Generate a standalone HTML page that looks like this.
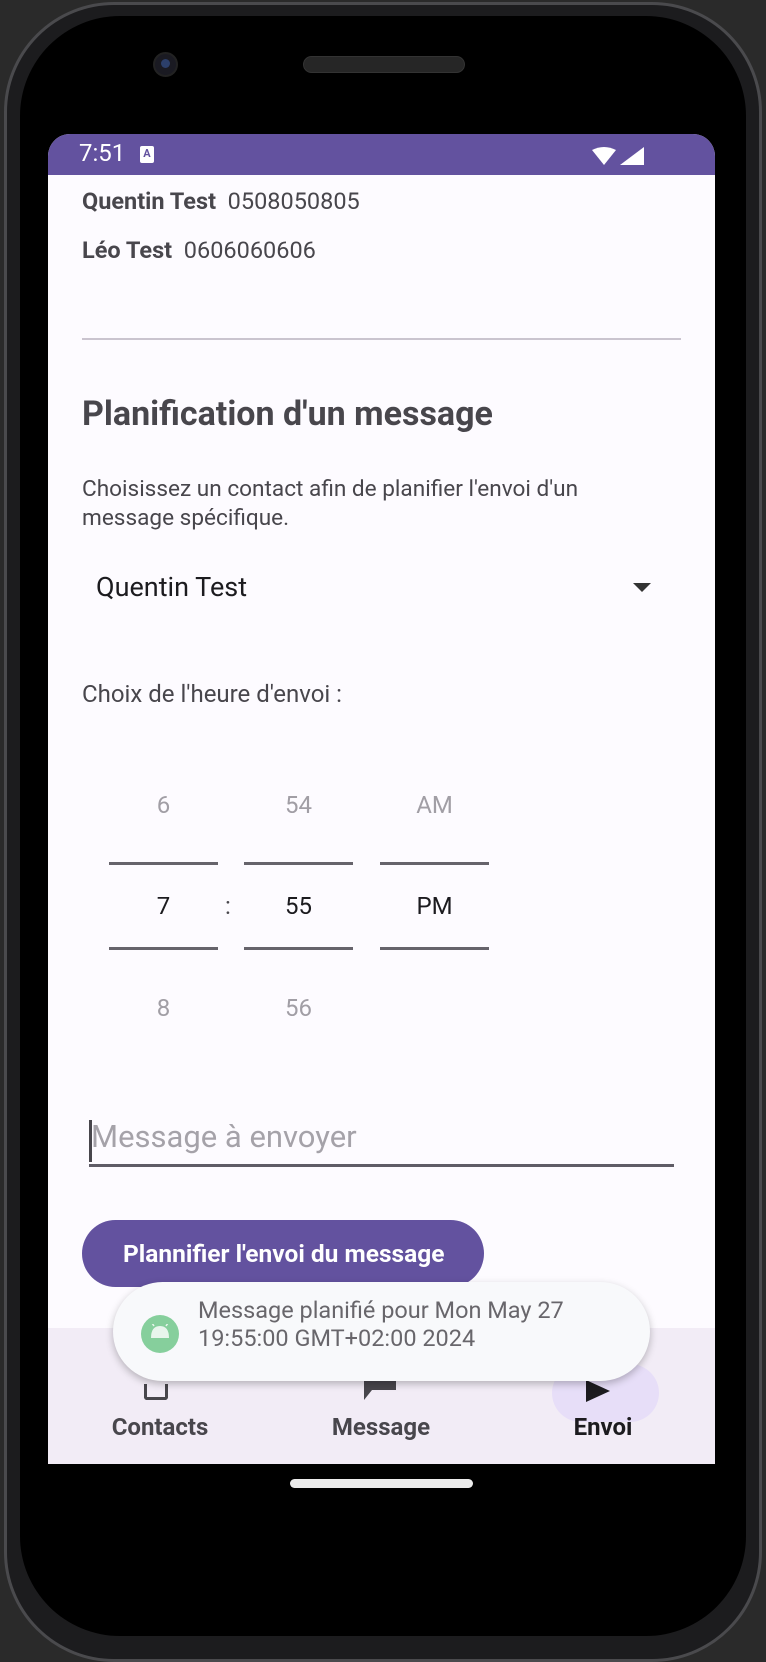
<!DOCTYPE html>
<html><head><meta charset="utf-8"><style>
*{margin:0;padding:0;box-sizing:border-box}
body{width:766px;height:1600px;background:#2a2a2a;position:relative;overflow:hidden;font-family:"Roboto","Liberation Sans",sans-serif}
.a{position:absolute}
.frame{left:4px;top:2px;width:758px;height:1660px;border-radius:110px;background:#1c1c1e;border:3px solid #4a4a4d}
.inner{left:20px;top:16px;width:726px;height:1620px;border-radius:100px;background:#000}
.screen{left:48px;top:134px;width:667px;height:1330px;background:#fdfbff;border-radius:22px 22px 0 0;overflow:hidden}
.t{position:absolute;white-space:nowrap}
.line{position:absolute;height:3px;background:#66636b}
</style></head><body>
<div class="a frame"></div>
<div class="a inner"></div>
<div class="a" style="left:153px;top:52px;width:25px;height:25px;border-radius:50%;background:#1a1a22;border:2px solid #222"></div>
<div class="a" style="left:161px;top:59px;width:9px;height:9px;border-radius:50%;background:#2c3f6a"></div>
<div class="a" style="left:303px;top:56px;width:162px;height:17px;border-radius:9px;background:#262626;border:1px solid #333"></div>

<div class="a screen">
 <div class="a" style="left:0;top:0;width:667px;height:41px;background:#63529f"></div>
 <div class="t" style="left:31px;top:5px;font-size:24px;color:#fff">7:51</div>
 <div class="a" style="left:92px;top:12px;width:14px;height:17px;background:#fff;border-radius:2px;font-size:11px;font-weight:bold;color:#63529f;text-align:center;line-height:15px">A</div>
 <svg class="a" style="left:544px;top:13px" width="52" height="18"><path d="M0 3 Q12 -3 24 3 L12 18 Z" fill="#fff"/><path d="M52 0 L52 18 L28 18 Z" fill="#fff"/></svg>

 <div class="t" style="left:34px;top:53px;font-size:23.5px;color:#48464c"><b>Quentin Test</b>&nbsp;&nbsp;0508050805</div>
 <div class="t" style="left:34px;top:102px;font-size:23.5px;color:#48464c"><b>Léo Test</b>&nbsp;&nbsp;0606060606</div>
 <div class="a" style="left:34px;top:204px;width:599px;height:2px;background:#cac4cf"></div>
 <div class="t" style="left:34px;top:260px;font-size:34px;font-weight:bold;color:#48464c">Planification d'un message</div>
 <div class="t" style="left:34px;top:340px;font-size:22.6px;line-height:29px;color:#48464c">Choisissez un contact afin de planifier l'envoi d'un<br>message spécifique.</div>
 <div class="t" style="left:48px;top:437px;font-size:27px;color:#1c1b1f">Quentin Test</div>
 <svg class="a" style="left:585px;top:449px" width="18" height="10"><path d="M0 0 L18 0 L9 9 Z" fill="#333"/></svg>
 <div class="t" style="left:34px;top:546px;font-size:24px;color:#48464c">Choix de l'heure d'envoi :</div>

 <div class="t" style="left:61px;top:657px;width:109px;text-align:center;font-size:24px;color:#a19ea5">6</div>
 <div class="t" style="left:196px;top:657px;width:109px;text-align:center;font-size:24px;color:#a19ea5">54</div>
 <div class="t" style="left:332px;top:657px;width:109px;text-align:center;font-size:24px;color:#a19ea5">AM</div>
 <div class="line" style="left:61px;top:728px;width:109px"></div>
 <div class="line" style="left:196px;top:728px;width:109px"></div>
 <div class="line" style="left:332px;top:728px;width:109px"></div>
 <div class="t" style="left:61px;top:758px;width:109px;text-align:center;font-size:24px;color:#1c1b1f">7</div>
 <div class="t" style="left:177px;top:758px;font-size:24px;color:#48464c">:</div>
 <div class="t" style="left:196px;top:758px;width:109px;text-align:center;font-size:24px;color:#1c1b1f">55</div>
 <div class="t" style="left:332px;top:758px;width:109px;text-align:center;font-size:24px;color:#1c1b1f">PM</div>
 <div class="line" style="left:61px;top:813px;width:109px"></div>
 <div class="line" style="left:196px;top:813px;width:109px"></div>
 <div class="line" style="left:332px;top:813px;width:109px"></div>
 <div class="t" style="left:61px;top:860px;width:109px;text-align:center;font-size:24px;color:#a19ea5">8</div>
 <div class="t" style="left:196px;top:860px;width:109px;text-align:center;font-size:24px;color:#a19ea5">56</div>

 <div class="a" style="left:41px;top:986px;width:3px;height:42px;background:#48464c"></div>
 <div class="t" style="left:43px;top:984px;font-size:31px;color:#a5a2a9">Message à envoyer</div>
 <div class="a" style="left:41px;top:1030px;width:585px;height:3px;background:#5f5c66"></div>

 <div class="a" style="left:34px;top:1086px;width:402px;height:67px;border-radius:34px;background:#63529f;color:#fff;font-size:24.5px;font-weight:bold;line-height:67px;padding-left:41px">Plannifier l'envoi du message</div>

 <div class="a" style="left:0;top:1194px;width:667px;height:136px;background:#f2ecf6"></div>
 <div class="a" style="left:504px;top:1230px;width:107px;height:58px;border-radius:29px;background:#e7def8"></div>
 <svg class="a" style="left:538px;top:1246px" width="24" height="22"><path d="M0 0 L24 11 L0 22 Z" fill="#1c1b1f"/></svg>
 <div class="a" style="left:96px;top:1250px;width:24px;height:16px;border:3px solid #48464c;border-top:none;border-radius:0 0 3px 3px"></div>
 <svg class="a" style="left:314px;top:1244px" width="36" height="24"><path d="M2 0 H34 V12 H10 L2 22 Z" fill="#48464c"/></svg>
 <div class="t" style="left:52px;top:1279px;width:120px;text-align:center;font-size:24px;font-weight:bold;color:#48464c">Contacts</div>
 <div class="t" style="left:273px;top:1279px;width:120px;text-align:center;font-size:24px;font-weight:bold;color:#48464c">Message</div>
 <div class="t" style="left:495px;top:1279px;width:120px;text-align:center;font-size:24px;font-weight:bold;color:#1c1b1f">Envoi</div>

 <div class="a" style="left:65px;top:1148px;width:537px;height:99px;border-radius:50px;background:#f8f9fb;box-shadow:0 3px 8px rgba(0,0,0,0.25)"></div>
 <div class="a" style="left:93px;top:1181px;width:38px;height:38px;border-radius:50%;background:#86cf9c"></div>
 <svg class="a" style="left:101px;top:1190px" width="22" height="16"><path d="M2 14 Q2 2 11 2 Q20 2 20 14 Z" fill="#e8f5ec"/><path d="M5 2 L3 -1 M17 2 L19 -1" stroke="#e8f5ec" stroke-width="1.5"/></svg>
 <div class="t" style="left:150px;top:1162px;font-size:23.5px;line-height:28px;color:#68666b">Message planifié pour Mon May 27<br>19:55:00 GMT+02:00 2024</div>
</div>
<div class="a" style="left:290px;top:1479px;width:183px;height:9px;border-radius:5px;background:#ececec"></div>
</body></html>
